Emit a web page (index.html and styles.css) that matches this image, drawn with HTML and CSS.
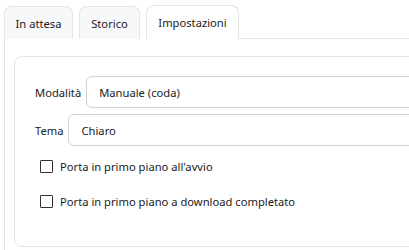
FILE: index.html
```html
<!DOCTYPE html>
<html lang="it">

<head>
    <meta charset="UTF-8">
    <meta name="viewport" content="width=device-width, initial-scale=1.0">
    <title>Impostazioni</title>
    <link rel="stylesheet" href="styles.css">
</head>

<body>
    <div class="window">
        <div class="tabbar">
            <div class="tab">In attesa</div>
            <div class="tab">Storico</div>
            <div class="tab active">Impostazioni</div>
            <div class="tab-fill"></div>
        </div>
        <div class="pane">
            <div class="group">
                <div class="row">
                    <label class="label">Modalità</label>
                    <div class="field">Manuale (coda)</div>
                </div>
                <div class="row">
                    <label class="label">Tema</label>
                    <div class="field">Chiaro</div>
                </div>
                <div class="check first">
                    <span class="box"></span>
                    <span>Porta in primo piano all'avvio</span>
                </div>
                <div class="check">
                    <span class="box"></span>
                    <span>Porta in primo piano a download completato</span>
                </div>
            </div>
        </div>
    </div>
</body>

</html>
```

FILE: styles.css
```css
* {
    margin: 0;
    padding: 0;
    box-sizing: border-box;
}

body {
    width: 409px;
    height: 250px;
    overflow: hidden;
    background: #fff;
    font-family: "Noto Sans", sans-serif;
    font-size: 11.2px;
    color: #1a1a1a;
}

.window {
    width: 600px;
}

/* tabs */
.tabbar {
    display: flex;
    align-items: flex-end;
    padding: 5px 0 0 4px;
    height: 39px;
}

.tab {
    height: 33px;
    display: flex;
    align-items: center;
    justify-content: center;
    border: 1px solid #e5e5e5;
    border-bottom: none;
    border-radius: 8px 8px 0 0;
    background-color: #f7f8fa;
    margin-right: 6px;
}

.tab:nth-child(1) {
    width: 69px;
}

.tab:nth-child(2) {
    width: 61px;
}

.tab.active {
    width: 93px;
    height: 34px;
    background-color: #fff;
    margin-right: 0;
}

.tab-fill {
    flex: 1;
    border-bottom: 1px solid #e5e5e5;
}

/* pane */
.pane {
    margin-left: 4px;
    border-left: 1px solid #e5e5e5;
    padding: 17px 0 0 9px;
    height: 220px;
}

.group {
    display: flex;
    flex-direction: column;
    border: 1px solid #e5e5e5;
    border-radius: 8px;
    height: 191px;
    padding: 19px 0 0 20px;
}

.row {
    display: flex;
    align-items: center;
    margin-bottom: 6px;
}

.label {
    margin-right: 5px;
}

.field {
    flex: 1;
    height: 32px;
    display: flex;
    align-items: center;
    padding-left: 12px;
    border: 1px solid #d0d0d8;
    border-radius: 6px;
}

.check {
    display: flex;
    align-items: center;
    padding-left: 5px;
    height: 13px;
    margin-top: 22px;
}

.check.first {
    margin-top: 8px;
}

.box {
    width: 13px;
    height: 13px;
    border: 1px solid #333;
    border-radius: 1px;
    margin-right: 7px;
}
```
